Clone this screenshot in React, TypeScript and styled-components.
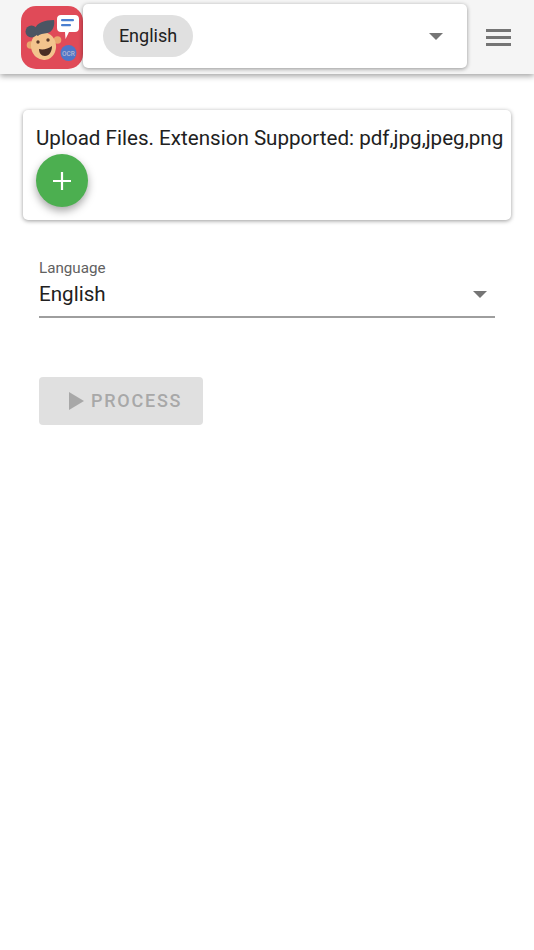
import React from "react";
import styled, { createGlobalStyle } from "styled-components";

const Global = createGlobalStyle`
  html, body { margin: 0; padding: 0; background: #fff; }
  body { font-family: Roboto, "Liberation Sans", sans-serif; }
`;
const Page = styled.div`
  width: 534px;
  height: 950px;
  overflow: hidden;
  background: #fff;
`;
const Header = styled.header`
  height: 74px;
  box-sizing: border-box;
  background: #f5f5f5;
  box-shadow: 0 2px 6px rgba(0, 0, 0, 0.38);
  display: flex;
  align-items: flex-start;
  padding: 4px 0 0 21px;
`;
const Logo = styled.svg`
  width: 62px;
  height: 63px;
  margin-top: 2px;
  flex: none;
`;
const LangCard = styled.div`
  width: 384px;
  height: 64px;
  box-sizing: border-box;
  background: #fff;
  border-radius: 5px;
  box-shadow: 0 1px 4px rgba(0, 0, 0, 0.4);
  display: flex;
  align-items: center;
  justify-content: space-between;
  padding: 0 24px 0 20px;
`;
const Chip = styled.div`
  width: 90px;
  height: 42px;
  border-radius: 21px;
  background: #e0e0e0;
  color: #212121;
  font-size: 18px;
  padding-bottom: 1px;
  box-sizing: border-box;
  display: flex;
  align-items: center;
  justify-content: center;
`;
const Caret = styled.div`
  width: 0;
  height: 0;
  border-left: 7px solid transparent;
  border-right: 7px solid transparent;
  border-top: 7px solid #757575;
`;
const Burger = styled.svg`
  width: 25px;
  height: 18px;
  margin: 25px 0 0 19px;
  flex: none;
`;
const Main = styled.main`
  padding: 36px 23px 0;
  display: flex;
  flex-direction: column;
`;
const UploadCard = styled.section`
  width: 488px;
  height: 110px;
  box-sizing: border-box;
  background: #fff;
  border-radius: 5px;
  box-shadow: 0 1px 4px rgba(0, 0, 0, 0.4);
  padding: 14px 0 0 13px;
`;
const UploadText = styled.div`
  font-size: 20.6px;
  line-height: 28px;
  color: #212121;
  white-space: nowrap;
`;
const Fab = styled.button`
  width: 52px;
  height: 53px;
  margin-top: 2px;
  padding: 0;
  border: none;
  border-radius: 50%;
  background: #4caf50;
  box-shadow: 0 4px 9px rgba(0, 0, 0, 0.35);
  display: flex;
  align-items: center;
  justify-content: center;
`;
const Field = styled.div`
  width: 456px;
  margin: 38px 0 0 16px;
  border-bottom: 2px solid #9e9e9e;
  height: 60px;
  box-sizing: border-box;
`;
const FieldLabel = styled.div`
  font-size: 15.2px;
  line-height: 18px;
  color: #616161;
  padding-top: 1px;
`;
const FieldRow = styled.div`
  display: flex;
  align-items: center;
  justify-content: space-between;
  font-size: 20.6px;
  line-height: 28px;
  color: #212121;
  padding-right: 8px;
  margin-top: 3px;
`;
const ProcessButton = styled.button`
  width: 164px;
  height: 48px;
  margin: 59px 0 0 16px;
  border: none;
  border-radius: 4px;
  background: #e0e0e0;
  color: #a8a8a8;
  font-family: inherit;
  font-size: 18px;
  font-weight: 500;
  letter-spacing: 1.75px;
  display: flex;
  align-items: center;
  gap: 7px;
  padding: 0 0 0 30px;
`;
const ProcessLabel = styled.span`
  padding-bottom: 2px;
`;
const Play = styled.svg`
  width: 15px;
  height: 18px;
`;

export default function App() {
  return (
    <Page>
      <Global />
      <Header>
        <Logo viewBox="0 0 62 63">
          <rect width="62" height="63" rx="15" fill="#e04a58" />
          <circle cx="36.5" cy="34" r="3.8" fill="#e9a86f" />
          <circle cx="9.5" cy="39" r="3.8" fill="#e9a86f" />
          <ellipse cx="22.5" cy="40" rx="12.5" ry="14" fill="#f3c48d" transform="rotate(-10 22.5 40)" />
          <circle cx="10.5" cy="25.5" r="6" fill="#4b5563" />
          <path d="M14 23C15 17 24 14 33 14C34 19 32 25 28 26.5C24 28 20 27 17 30C14 29 13 26 14 23Z" fill="#4b5563" />
          <circle cx="17" cy="36" r="1.7" fill="#5b3a29" />
          <circle cx="27" cy="34" r="1.7" fill="#5b3a29" />
          <path d="M18 43C22 44 27 43 31 40C31 46 28 50 24 50C20 50 18 47 18 43Z" fill="#4a2e25" />
          <path d="M40 9H54C56.5 9 58 10.5 58 13V22C58 24.5 56.5 26 54 26H48L44.5 33L44 26H40C37.5 26 36 24.5 36 22V13C36 10.5 37.5 9 40 9Z" fill="#fff" />
          <rect x="40" y="13" width="13" height="2.2" rx="1" fill="#4a7fd0" />
          <rect x="40" y="18" width="10" height="2.2" rx="1" fill="#4a7fd0" />
          <circle cx="47.5" cy="47" r="8" fill="#4f76c9" />
          <text x="47.5" y="49.5" fontSize="6.5" fontFamily="Roboto, sans-serif" fontWeight="500" fill="#b9b6d0" textAnchor="middle">OCR</text>
        </Logo>
        <LangCard>
          <Chip>English</Chip>
          <Caret />
        </LangCard>
        <Burger viewBox="0 0 25 18">
          <rect y="0" width="25" height="3" fill="#757575" />
          <rect y="7" width="25" height="3" fill="#757575" />
          <rect y="14" width="25" height="3" fill="#757575" />
        </Burger>
      </Header>
      <Main>
        <UploadCard>
          <UploadText>Upload Files. Extension Supported: pdf,jpg,jpeg,png</UploadText>
          <Fab aria-label="Add">
            <svg width="22" height="22" viewBox="0 0 22 22">
              <path d="M11 2V20M2 11H20" stroke="#fff" strokeWidth="2.2" />
            </svg>
          </Fab>
        </UploadCard>
        <Field>
          <FieldLabel>Language</FieldLabel>
          <FieldRow>
            English
            <Caret />
          </FieldRow>
        </Field>
        <ProcessButton disabled>
          <Play viewBox="0 0 15 18">
            <path d="M0 0L15 9L0 18Z" fill="#a8a8a8" />
          </Play>
          <ProcessLabel>PROCESS</ProcessLabel>
        </ProcessButton>
      </Main>
    </Page>
  );
}
